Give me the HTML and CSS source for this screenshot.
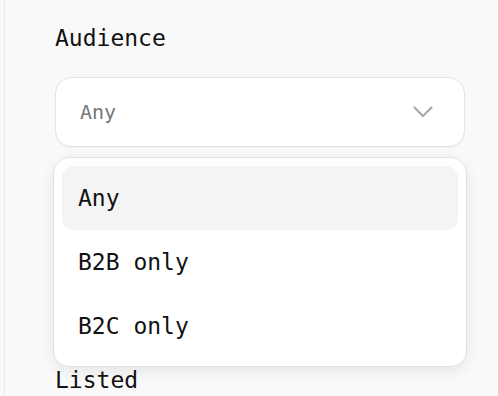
FILE: index.html
```html
<!DOCTYPE html>
<html lang="en">
<head>
  <meta charset="UTF-8" />
  <meta name="viewport" content="width=device-width, initial-scale=1.0"/>
  <title>Filters</title>
  <link rel="stylesheet" href="styles.css">
</head>
<body>
  <div class="panel">
    <div class="field">
      <label class="field-label">Audience</label>
      <div class="select-trigger">
        <span class="select-value">Any</span>
        <svg class="chevron" width="20" height="12" viewBox="0 0 20 12">
          <path d="M1.5 1.5 L10 10 L18.5 1.5" fill="none" stroke="#a9a9a9" stroke-width="2.2" stroke-linecap="round" stroke-linejoin="round"/>
        </svg>
      </div>
      <ul class="select-menu">
        <li class="option active">Any</li>
        <li class="option">B2B only</li>
        <li class="option">B2C only</li>
      </ul>
    </div>

    <div class="field">
      <label class="field-label">Listed</label>
    </div>
  </div>
</body>
</html>
```

FILE: styles.css
```css
* {
  box-sizing: border-box;
  margin: 0;
  padding: 0;
}

body {
  background: #f9f9f9;
  font-family: 'DejaVu Sans Mono', monospace;
  color: #111;
  overflow: hidden;
}

.panel {
  margin-left: 4px;
  border-left: 1px solid #e8e8e8;
  padding: 25px 33px 0 50px;
  min-height: 100vh;
}

.field-label {
  display: block;
  font-size: 23px;
  line-height: 27px;
  color: #111;
}

.select-trigger {
  margin-top: 25px;
  height: 70px;
  display: flex;
  align-items: center;
  justify-content: space-between;
  padding: 0 31px 0 24px;
  background: #fff;
  border: 1px solid #e3e3e3;
  border-radius: 16px;
  box-shadow: 0 1px 2px rgba(0,0,0,0.04);
}

.select-value {
  font-size: 20px;
  color: #777;
}

.chevron {
  display: block;
}

.select-menu {
  list-style: none;
  margin: 10px -2px 0;
  padding: 8px;
  background: #fff;
  border: 1px solid #e3e3e3;
  border-radius: 16px;
  box-shadow: 0 4px 14px rgba(0,0,0,0.08);
}

.option {
  height: 64px;
  display: flex;
  align-items: center;
  padding-left: 16px;
  font-size: 23px;
  border-radius: 12px;
  color: #111;
}

.option.active {
  background: #f4f4f4;
}
```
